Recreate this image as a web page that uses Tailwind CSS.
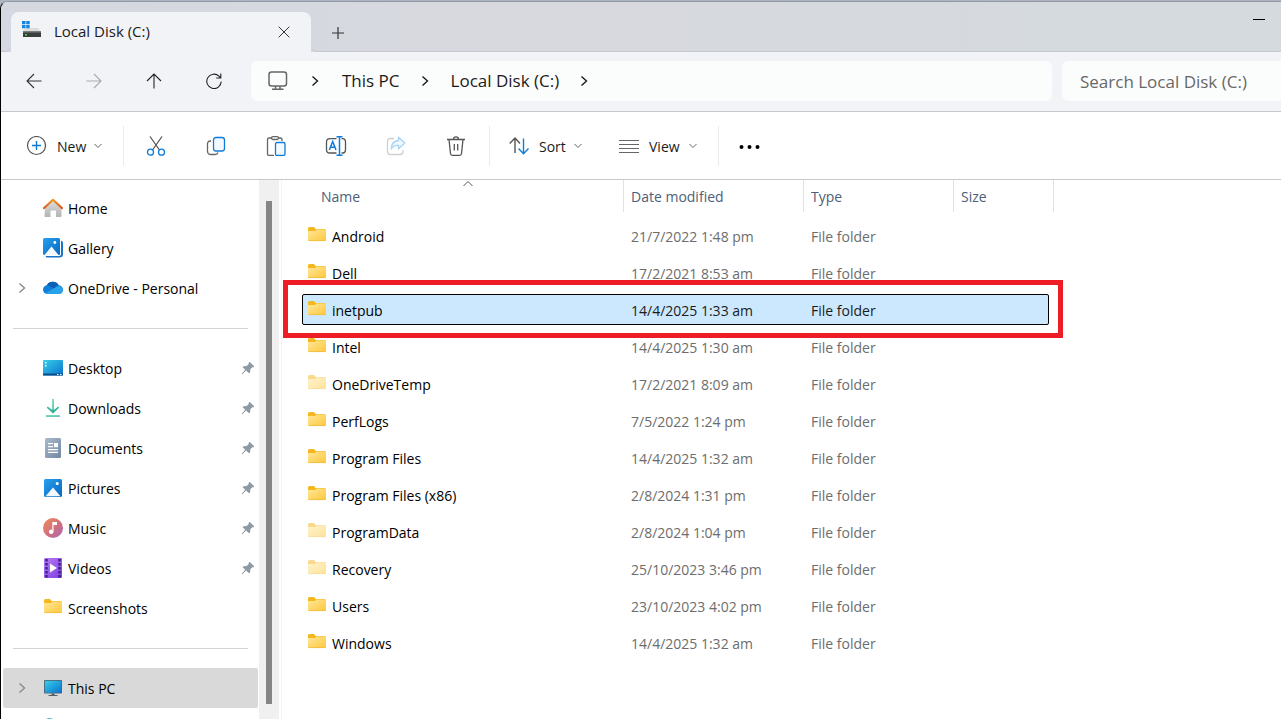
<!DOCTYPE html>
<html lang="en">
<head>
  <meta charset="UTF-8" />
  <title>Local Disk (C:)</title>
  <meta name="viewport" content="width=device-width, initial-scale=1.0" />
  <script src="https://cdn.jsdelivr.net/npm/@tailwindcss/browser@4"></script>
</head>
<body class="h-screen overflow-hidden bg-[#aeb5c0] font-['Open_Sans','Noto_Sans',sans-serif] text-sm text-[#1b1b1b]">

  <!-- shared icons -->
  <svg class="absolute size-0" aria-hidden="true">
    <defs>
      <linearGradient id="gFolder" x1="0" y1="0" x2="1" y2="1"><stop offset="0" stop-color="#ffe69a" /><stop offset="1" stop-color="#fdc93c" /></linearGradient>
      <linearGradient id="gBlue" x1="0" y1="0" x2="1" y2="1"><stop offset="0" stop-color="#2aa0ee" /><stop offset="1" stop-color="#0567c0" /></linearGradient>
      <linearGradient id="gTeal" x1="0" y1="0" x2="1" y2="1"><stop offset="0" stop-color="#35d0e8" /><stop offset="1" stop-color="#0a72cf" /></linearGradient>
      <linearGradient id="gGray" x1="0" y1="0" x2="0" y2="1"><stop offset="0" stop-color="#dfdfdf" /><stop offset="1" stop-color="#b3b3b3" /></linearGradient>
      <linearGradient id="gDoc" x1="0" y1="0" x2="1" y2="1"><stop offset="0" stop-color="#a9bacb" /><stop offset="1" stop-color="#7287a3" /></linearGradient>
      <linearGradient id="gRoof" x1="0" y1="0" x2="0" y2="1"><stop offset="0" stop-color="#f7941d" /><stop offset="1" stop-color="#d9531e" /></linearGradient>
      <linearGradient id="gMusic" x1="0" y1="0" x2="1" y2="1"><stop offset="0" stop-color="#ee8a5a" /><stop offset=".55" stop-color="#d1707c" /><stop offset="1" stop-color="#a565c0" /></linearGradient>
      <linearGradient id="gVideo" x1="0" y1="0" x2="1" y2="1"><stop offset="0" stop-color="#b77bf5" /><stop offset="1" stop-color="#7d3fe0" /></linearGradient>
      <linearGradient id="gDown" x1="0" y1="0" x2="0" y2="1"><stop offset="0" stop-color="#5fd3a0" /><stop offset="1" stop-color="#27ab98" /></linearGradient>
      <symbol id="folder" viewBox="0 0 20 20">
        <path d="M1 1.500Q1 0 2.500 0H7L8.500 2H17.500Q19 2 19 3.500V7H1Z" fill="#f5b71e" />
        <path d="M1 4H8L9.500 2.500H18Q19 2.500 19 3.500V13Q19 14 18 14H2Q1 14 1 13Z" fill="url(#gFolder)" />
        <path d="M1.500 13.600H18.500" stroke="#f0b93a" stroke-width=".8" />
      </symbol>
      <symbol id="chev-right" viewBox="0 0 8 12"><path d="M1.500 1.500L6.500 6L1.500 10.500" fill="none" stroke="currentColor" stroke-width="1.400" /></symbol>
      <symbol id="chev-down" viewBox="0 0 8 8"><path d="M.5 2L4 5.500L7.500 2" fill="none" stroke="currentColor" /></symbol>
      <symbol id="pin" viewBox="0 0 14 14"><path d="M8.500 .8L13.200 5.300L12.200 6.400L11.300 6.200L9.200 8.500V11.300L8 12.300L5 9.400L1.300 13.200L.7 12.800L4.200 8.700L1.600 6.300L2.600 5.200L5.600 5L7.900 2.800L7.600 1.800Z" fill="#8e9aa3" /></symbol>
    </defs>
  </svg>

  <div class="mt-px flex h-full flex-col overflow-hidden rounded-tl-lg border-t border-l border-t-[#8f97a4] border-l-black bg-white">

    <!-- title bar -->
    <header class="flex h-[50px] shrink-0 bg-linear-to-r from-[#d5d8e0] via-[#d7d9de] to-[#d4dade]">
      <div class="w-2.5 rounded-br-md border-b border-[#c3c7d0]"></div>
      <div class="flex h-10 w-[300px] items-center self-end rounded-t-lg bg-[#f2f3f6] pr-[21px] pl-[11px] text-[15px]">
        <svg class="mb-1 size-5" viewBox="0 0 20 20">
          <path d="M3 8H16L19 12H0Z" fill="#dcdcdc" />
          <rect x="1" y="11.500" width="18" height="5.500" rx=".5" fill="#3c3c3c" />
          <rect x="1" y="11.500" width="18" height="1.200" fill="#6b6b6b" />
          <rect x="3" y="14" width="2" height="1.500" fill="#35e04a" />
          <path d="M0 1h3.500v3.200H0zM4.200 1h3.500v3.200H4.200zM0 5h3.500v3.200H0zM4.200 5h3.500v3.200H4.200z" fill="#1585df" />
        </svg>
        <span class="ml-3 flex-1">Local Disk (C:)</span>
        <button class="size-3" aria-label="Close tab">
          <svg viewBox="0 0 12 12" fill="none" stroke="#333"><path d="M.7 .7L11.300 11.300M11.300 .7L.7 11.300" /></svg>
        </button>
      </div>
      <div class="flex flex-1 items-center justify-between rounded-bl-md border-b border-[#c3c7d0] pr-4 pl-[21px]">
        <button class="mt-3 size-3" aria-label="New tab">
          <svg viewBox="0 0 12 12" fill="none" stroke="#333" stroke-width="1.200"><path d="M6 0V12M0 6H12" /></svg>
        </button>
        <button class="mb-4 size-3" aria-label="Minimise">
          <svg viewBox="0 0 12 12"><path d="M0 6H12V7H0Z" /></svg>
        </button>
      </div>
    </header>

    <!-- navigation and address -->
    <nav class="flex h-[60px] shrink-0 items-center border-b border-[#c6c7cd] bg-[#f2f3f6] pb-px pl-[3px] text-[17px]">
      <button class="flex w-[60px] justify-center" aria-label="Back">
        <svg class="size-4" viewBox="0 0 16 16" fill="none" stroke="#333" stroke-width="1.100"><path d="M15.500 8H1M8 1L1 8L8 15" /></svg>
      </button>
      <button class="flex w-[60px] justify-center" aria-label="Forward" disabled>
        <svg class="size-4" viewBox="0 0 16 16" fill="none" stroke="#aaabad" stroke-width="1.100"><path d="M.5 8H15M8 1L15 8L8 15" /></svg>
      </button>
      <button class="flex w-[60px] justify-center" aria-label="Up">
        <svg class="size-4" viewBox="0 0 16 16" fill="none" stroke="#222" stroke-width="1.100"><path d="M8 15.500V1M1 8L8 1L15 8" /></svg>
      </button>
      <button class="flex w-[60px] justify-center" aria-label="Refresh">
        <svg class="size-4" viewBox="0 0 16 16" fill="none" stroke="#222" stroke-width="1.100"><path d="M15.200 8.500A7.200 7.200 0 1 1 13 3.200L14.700 4.800M14.800 .5V5H10.200" /></svg>
      </button>
      <div class="ml-[7px] flex h-10 flex-1 items-center rounded-md bg-[#fbfdfc] pl-[17px]">
        <svg class="size-5" viewBox="0 0 20 20" fill="none" stroke="#666" stroke-width="1.500">
          <rect x="1" y="1" width="17.500" height="14" rx="2.500" /><path d="M7.500 15V18M12 15V18M4 18.200H15.500" />
        </svg>
        <svg class="ml-[23px] h-3 w-2"><use href="#chev-right" /></svg>
        <button class="ml-[23px]">This PC</button>
        <svg class="ml-[21px] h-3 w-2"><use href="#chev-right" /></svg>
        <button class="ml-[22px]">Local Disk (C:)</button>
        <svg class="ml-[21px] h-3 w-2"><use href="#chev-right" /></svg>
      </div>
      <input type="search" aria-label="Search" placeholder="Search Local Disk (C:)" class="ml-2.5 h-10 w-[219px] rounded-l-md bg-[#fbfdfc] pl-[18px] placeholder:text-[#686868]" />
    </nav>

    <!-- command bar -->
    <div class="flex h-[68px] shrink-0 items-center border-b border-[#c6c7cb]">
      <button class="flex w-[122px] items-center pl-[25px]">
        <svg class="size-5" viewBox="0 0 20 20" fill="none"><circle cx="10.500" cy="9.500" r="9" stroke="#555" stroke-width="1.200" /><path d="M10.500 5V14M6 9.500H15" stroke="#0f7cd8" stroke-width="1.400" /></svg>
        <span class="ml-[11px] flex-1 pt-0.5 text-left">New</span>
        <svg class="mr-[21px] size-2 text-[#666]"><use href="#chev-down" /></svg>
      </button>
      <div class="mr-0.5 h-10 w-px bg-[#ebebeb]"></div>
      <button class="flex w-[60px] justify-center" aria-label="Cut">
        <svg class="size-5" viewBox="0 0 20 20" fill="none" stroke-width="1.300"><path d="M4 .5L13.500 14M16 .5L6.500 14" stroke="#555" /><circle cx="4.500" cy="16.200" r="3" stroke="#0f7cd8" /><circle cx="15.500" cy="16.200" r="3" stroke="#0f7cd8" /></svg>
      </button>
      <button class="flex w-[60px] justify-center" aria-label="Copy">
        <svg class="size-5" viewBox="0 0 20 20" fill="none" stroke-width="1.300"><path d="M5 5H4.500Q1.500 5 1.500 8V15Q1.500 18.500 5 18.500H9Q11.500 18.500 12 16.500" stroke="#666" /><rect x="7.500" y="1.500" width="11" height="13.500" rx="2.500" stroke="#0f7cd8" fill="#f4f9fe" /></svg>
      </button>
      <button class="flex w-[60px] justify-center" aria-label="Paste">
        <svg class="size-5" viewBox="0 0 20 20" fill="none" stroke-width="1.300"><path d="M6 2H3Q1.500 2 1.500 3.500V18Q1.500 19.500 3 19.500H8M12 2H14.500Q16 2 16 3.500V5" stroke="#666" /><rect x="5.500" y=".7" width="7" height="2.800" rx="1.400" stroke="#666" /><rect x="9.500" y="6.500" width="9.500" height="13" rx="1.500" stroke="#0f7cd8" fill="#f4f9fe" /></svg>
      </button>
      <button class="flex w-[60px] justify-center" aria-label="Rename">
        <svg class="h-5 w-[22px]" viewBox="0 0 22 20" fill="none" stroke-width="1.300"><path d="M11.500 2.700H5Q1.500 2.700 1.500 6V14Q1.500 17 5 17H11.500M16.500 2.700H17.500Q20.500 2.700 20.500 6V14Q20.500 17 17.500 17H16.500" stroke="#555" /><path d="M11.500 .7H17.500M11.500 19.300H17.500M14.500 .7V19.300M4.300 14L7.700 5.500L11 14M5.500 11.200H10" stroke="#0f7cd8" stroke-width="1.500" /></svg>
      </button>
      <button class="flex w-[60px] justify-center" aria-label="Share" disabled>
        <svg class="size-5" viewBox="0 0 20 20" fill="none" stroke-width="1.300"><path d="M8 2.500H4.500Q1.500 2.500 1.500 5.500V15.500Q1.500 18.500 4.500 18.500H14Q17 18.500 17 15.500V14" stroke="#cfcfcf" /><path d="M12.500 1.200L18.800 7L12.500 12.700V9.500Q7.500 9 5.200 13Q5.500 5 12.500 4.500Z" stroke="#a8d3f3" fill="#eef7fd" stroke-linejoin="round" /></svg>
      </button>
      <button class="flex w-[60px] justify-center" aria-label="Delete">
        <svg class="size-5" viewBox="0 0 20 20" fill="none" stroke="#555" stroke-width="1.300"><path d="M1 3.500H19M7.500 3.300Q7.500 .8 10 .8T12.500 3.300M3 3.500L4.500 17.500Q4.700 19.300 6.300 19.300H13.700Q15.300 19.300 15.500 17.500L17 3.500M8.300 8V14.500M11.700 8V14.500" /></svg>
      </button>
      <div class="ml-[3px] h-10 w-px bg-[#ebebeb]"></div>
      <button class="flex w-[110px] items-center pl-[19px]">
        <svg class="size-5" viewBox="0 0 20 20" fill="none" stroke-width="1.400"><path d="M6 17V2M.7 7.500L6 2L11 7.500" stroke="#555" /><path d="M14.500 2.500V17.500M9.500 12.500L14.500 17.700L19.500 12.500" stroke="#0f7cd8" /></svg>
        <span class="ml-2.5 flex-1 pt-0.5 text-left">Sort</span>
        <svg class="mr-[18px] size-2 text-[#666]"><use href="#chev-down" /></svg>
      </button>
      <button class="flex w-[118px] items-center pl-[19px]">
        <svg class="size-5" viewBox="0 0 20 20" stroke="#666" stroke-width="1.200"><path d="M0 4.500H20M0 8.500H20M0 12.500H20M0 16.500H20" /></svg>
        <span class="ml-2.5 flex-1 pt-0.5 text-left">View</span>
        <svg class="mr-[21px] size-2 text-[#666]"><use href="#chev-down" /></svg>
      </button>
      <div class="h-10 w-px bg-[#ebebeb]"></div>
      <button class="ml-5 size-[22px]" aria-label="More">
        <svg viewBox="0 0 22 22"><circle cx="2.500" cy="12" r="2" /><circle cx="10.500" cy="12" r="2" /><circle cx="18.500" cy="12" r="2" /></svg>
      </button>
    </div>

    <div class="flex min-h-0 flex-1">
      <!-- navigation pane -->
      <aside class="w-[258px] shrink-0 overflow-hidden pt-2 text-black">
        <a href="#" class="flex h-10 items-center pl-[42px]">
          <svg class="size-5" viewBox="0 0 20 20"><path d="M2 9L10 2L18.500 9V18Q18.500 19 17.500 19H13V12.500H7.500V19H2.500Q1.500 19 1.500 18Z" fill="url(#gGray)" /><path d="M.8 10.200L10 1.800L19.200 10.200" fill="none" stroke="url(#gRoof)" stroke-width="2" stroke-linecap="round" stroke-linejoin="round" /></svg>
          <span class="ml-[5px] pt-0.5">Home</span>
        </a>
        <a href="#" class="flex h-10 items-center pl-[42px]">
          <svg class="size-5" viewBox="0 0 20 20"><path d="M18 2.500Q20 3 20 5V16Q20 19.500 16.500 19.500H4Q3 19.500 2.500 18H16Q18 18 18 16Z" fill="#1675c9" /><rect width="17" height="17" rx="1.500" fill="url(#gBlue)" /><path d="M1.500 17L8.500 8.500L15.500 17Z" fill="#f3f9ff" /><circle cx="11.800" cy="4.500" r="1.400" fill="#fff" /></svg>
          <span class="ml-[5px] pt-0.5">Gallery</span>
        </a>
        <a href="#" class="flex h-10 items-center pl-[17px]">
          <svg class="h-3 w-2 text-[#8a8a8a]"><use href="#chev-right" /></svg>
          <svg class="ml-[17px] size-5" viewBox="0 0 20 20"><path d="M4 7A6.500 6 0 0 1 15.500 7Q20 8 20 12Q19.500 16 15.500 16H4.500Q0 15.500 0 11.500Q.2 8 4 7Z" fill="#0f7fd8" /><path d="M4 7A6.500 6 0 0 1 15.500 7L11 10.500Z" fill="#0a5eb5" /><path d="M2.500 15.300L12 9.800Q16 6 19.500 10Q20.500 15.500 15.500 16H4.500Z" fill="#28a3ea" /></svg>
          <span class="ml-[5px] pt-0.5">OneDrive - Personal</span>
        </a>
        <hr class="mt-5 mr-[11px] mb-[19px] ml-3 border-[#d4d4d4]" />
        <a href="#" class="flex h-10 items-center pr-1 pl-[42px]">
          <svg class="size-5" viewBox="0 0 20 20"><rect y="2" width="20" height="15.500" rx="1" fill="url(#gTeal)" /><path d="M0 15.500H20V17.500H0Z" fill="#0a4f8c" /><path d="M2 4h1.500v1.500H2zM2 7h1.500v1.500H2zM14 16h1.500v1H14zM17 16h1.500v1H17z" fill="#fff" /></svg>
          <span class="ml-[5px] flex-1 pt-0.5">Desktop</span>
          <svg class="size-3.5"><use href="#pin" /></svg>
        </a>
        <a href="#" class="flex h-10 items-center pr-1 pl-[42px]">
          <svg class="size-5" viewBox="0 0 20 20"><g fill="url(#gDown)"><path d="M9.300 1H10.800V12L15.300 8.500L16.200 9.800L10 15.500L3.800 9.800L4.700 8.500L9.300 12Z" /><path d="M3 17.200H17V18.700H3Z" /></g></svg>
          <span class="ml-[5px] flex-1 pt-0.5">Downloads</span>
          <svg class="size-3.5"><use href="#pin" /></svg>
        </a>
        <a href="#" class="flex h-10 items-center pr-1 pl-[42px]">
          <svg class="size-5" viewBox="0 0 20 20"><rect x="2" width="16" height="20" rx="1.500" fill="url(#gDoc)" /><path d="M5 5h5v1.300H5zM5 8h5v1.300H5zM11 5h4v4.300h-4zM5 11h10v1.300H5zM5 13.700h10v1.300H5z" fill="#fff" /></svg>
          <span class="ml-[5px] flex-1 pt-0.5">Documents</span>
          <svg class="size-3.5"><use href="#pin" /></svg>
        </a>
        <a href="#" class="flex h-10 items-center pr-1 pl-[42px]">
          <svg class="size-5" viewBox="0 0 20 20"><rect x="1" y="1" width="18" height="18" rx="1.500" fill="url(#gBlue)" /><path d="M2.500 18.300L10 9.500L17.500 18.300Z" fill="#f3f9ff" /><circle cx="14.200" cy="5.500" r="1.500" fill="#fff" /></svg>
          <span class="ml-[5px] flex-1 pt-0.5">Pictures</span>
          <svg class="size-3.5"><use href="#pin" /></svg>
        </a>
        <a href="#" class="flex h-10 items-center pr-1 pl-[42px]">
          <svg class="size-5" viewBox="0 0 20 20"><circle cx="10" cy="10" r="10" fill="url(#gMusic)" /><circle cx="8.200" cy="13.800" r="2.300" fill="#fff" /><path d="M9.300 4H14V7H10.500V13.800H9.300Z" fill="#fff" /></svg>
          <span class="ml-[5px] flex-1 pt-0.5">Music</span>
          <svg class="size-3.5"><use href="#pin" /></svg>
        </a>
        <a href="#" class="flex h-10 items-center pr-1 pl-[42px]">
          <svg class="size-5" viewBox="0 0 20 20"><rect x="1" width="18" height="20" rx="1" fill="url(#gVideo)" /><path d="M3.500 1V20M16.500 1V20" stroke="#3f1d86" stroke-width="2.400" stroke-dasharray="2.400 1.600" /><path d="M7 5.500L14 10L7 14.500Z" fill="#fff" /></svg>
          <span class="ml-[5px] flex-1 pt-0.5">Videos</span>
          <svg class="size-3.5"><use href="#pin" /></svg>
        </a>
        <a href="#" class="flex h-10 items-center pl-[42px]">
          <svg class="mt-0.5 size-5"><use href="#folder" /></svg>
          <span class="ml-[5px] pt-0.5">Screenshots</span>
        </a>
        <hr class="mt-5 mr-[11px] mb-[19px] ml-3 border-[#d4d4d4]" />
        <a href="#" class="mr-px ml-0.5 flex h-10 items-center rounded-xs bg-[#d9d9d9] pl-[15px]">
          <svg class="h-3 w-2 text-[#8a8a8a]"><use href="#chev-right" /></svg>
          <svg class="ml-[17px] size-5" viewBox="0 0 20 20"><rect x="1" y="2" width="18" height="13.500" rx=".8" fill="#53606c" /><rect x="1.800" y="2.800" width="16.400" height="12" fill="url(#gTeal)" /><path d="M8.500 15.500H11.500V17H14.500V18H5.500V17H8.500Z" fill="#53606c" /></svg>
          <span class="ml-[5px] pt-0.5">This PC</span>
        </a>
        <a href="#" class="flex h-10 items-center pl-[42px]" aria-label="Network">
          <svg class="size-5" viewBox="0 0 20 20"><circle cx="6.500" cy="6.500" r="6.500" fill="#4fb4e6" /></svg>
        </a>
      </aside>

      <!-- scrollbar -->
      <div class="flex w-5 shrink-0 justify-center bg-[#f0f0f0] pt-[21px] pb-4">
        <div class="w-1.5 bg-[#858585]"></div>
      </div>

      <!-- file list -->
      <main class="ml-0.5 min-w-0 flex-1 overflow-hidden border-l border-[#f3f3f3] pl-5">
        <table class="w-[752px] table-fixed">
          <colgroup><col class="w-[322px]" /><col class="w-[180px]" /><col class="w-[150px]" /><col class="w-[100px]" /></colgroup>
          <thead class="text-left text-[#4c607a]">
            <tr class="h-[38px] align-top">
              <th class="p-0 font-normal">
                <div class="relative flex h-8 items-center border-r border-[#e2e2e2] pt-0.5 pl-[19px]">Name
                  <svg class="absolute top-0 left-[161px] h-2 w-2.5" viewBox="0 0 10 8"><path d="M.5 6L5 1.500L9.500 6" fill="none" stroke="#555" /></svg>
                </div>
              </th>
              <th class="p-0 font-normal"><div class="flex h-8 items-center border-r border-[#e2e2e2] pt-0.5 pl-[7px]">Date modified</div></th>
              <th class="p-0 font-normal"><div class="flex h-8 items-center border-r border-[#e2e2e2] pt-0.5 pl-[7px]">Type</div></th>
              <th class="p-0 font-normal"><div class="flex h-8 items-center border-r border-[#e2e2e2] pt-0.5 pl-[7px]">Size</div></th>
            </tr>
          </thead>
          <tbody id="files"></tbody>
        </table>
      </main>
    </div>
  </div>

<script>
const files = [
  { name: "Android", date: "21/7/2022 1:48 pm" },
  { name: "Dell", date: "17/2/2021 8:53 am" },
  { name: "inetpub", date: "14/4/2025 1:33 am", selected: true },
  { name: "Intel", date: "14/4/2025 1:30 am" },
  { name: "OneDriveTemp", date: "17/2/2021 8:09 am", hidden: true },
  { name: "PerfLogs", date: "7/5/2022 1:24 pm" },
  { name: "Program Files", date: "14/4/2025 1:32 am" },
  { name: "Program Files (x86)", date: "2/8/2024 1:31 pm" },
  { name: "ProgramData", date: "2/8/2024 1:04 pm", hidden: true },
  { name: "Recovery", date: "25/10/2023 3:46 pm", hidden: true },
  { name: "Users", date: "23/10/2023 4:02 pm" },
  { name: "Windows", date: "14/4/2025 1:32 am" }
];

// selection box behind the row, red marker around it
const marker = `
  <span class="absolute top-0.5 right-[5px] bottom-1 left-0 -z-10 rounded-xs border border-black bg-[#cce8ff]"></span>
  <span class="absolute -top-3 -right-[9px] -bottom-[9px] -left-[19px] border-[5px] border-[#ee1c25]"></span>`;

document.getElementById("files").innerHTML = files.map(f => `
  <tr class="h-[37px] ${f.selected ? "relative z-10 text-[#1b1b1b]" : "text-[#6d6d6d]"}">
    <td class="p-0 text-black">
      ${f.selected ? marker : ""}
      <div class="flex items-center pl-[5px]">
        <svg class="size-5 ${f.hidden ? "opacity-50" : ""}"><use href="#folder" /></svg>
        <span class="ml-[5px]">${f.name}</span>
      </div>
    </td>
    <td class="p-0 pl-[7px]">${f.date}</td>
    <td class="p-0 pl-[7px]">File folder</td>
    <td class="p-0"></td>
  </tr>`).join("");
</script>
</body>
</html>
